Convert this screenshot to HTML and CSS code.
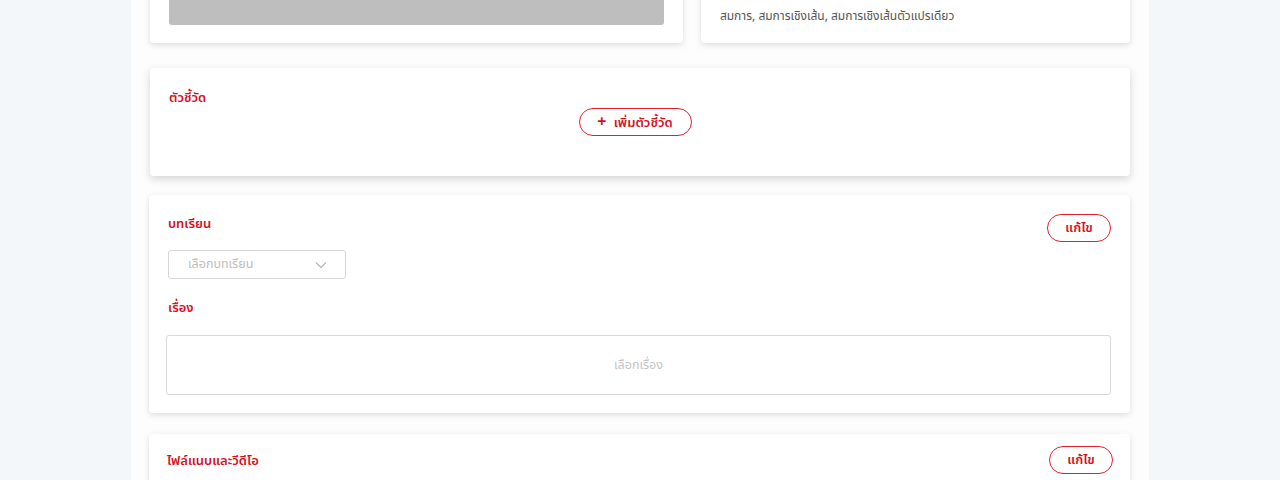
FILE: index.html
```html
<!DOCTYPE html>
<html lang="th">
<head>
<meta charset="utf-8">
<link rel="stylesheet" href="styles.css">
</head>
<body>
<main class="page">
  <div class="top-row">
    <section class="card card-cover">
      <div class="cover-img"></div>
    </section>
    <section class="card card-tags">
      <p class="tags">สมการ, สมการเชิงเส้น, สมการเชิงเส้นตัวแปรเดียว</p>
    </section>
  </div>

  <section class="card card-indicator">
    <h2 class="title">ตัวชี้วัด</h2>
    <div class="center">
      <button class="pill pill-add"><span class="plus">+</span> เพิ่มตัวชี้วัด</button>
    </div>
  </section>

  <section class="card card-lesson">
    <div class="head">
      <h2 class="title">บทเรียน</h2>
      <button class="pill pill-edit">แก้ไข</button>
    </div>
    <div class="select">
      <span>เลือกบทเรียน</span>
      <svg width="12" height="8" viewBox="0 0 12 8"><path d="M1 1.5 L6 6.5 L11 1.5" fill="none" stroke="#b5b5b5" stroke-width="1.2"/></svg>
    </div>
    <h2 class="title title-topic">เรื่อง</h2>
    <div class="topic-box">เลือกเรื่อง</div>
  </section>

  <section class="card card-files">
    <div class="head">
      <h2 class="title">ไฟล์แนบและวีดีโอ</h2>
      <button class="pill pill-edit">แก้ไข</button>
    </div>
  </section>
</main>
</body>
</html>
```

FILE: styles.css
```css
* { box-sizing: border-box; }
html, body { margin: 0; padding: 0; }
body {
  background: #f3f7fa;
  font-family: "Noto Sans Thai", "Noto Sans", "Noto Sans CJK SC", sans-serif;
  height: 480px;
  overflow: hidden;
}
.page {
  margin-left: 131px;
  width: 1018px;
  min-height: 480px;
  background: #fdfdfd;
  padding: 0 19px 0 18px;
  display: flex;
  flex-direction: column;
}
.card {
  background: #fff;
  border-radius: 4px;
  box-shadow: 0 2px 6px rgba(0,0,0,0.13);
}
.top-row {
  display: flex;
  gap: 18px;
  margin-top: -100px;
}
.card-cover {
  width: 534px;
  margin-left: 1px;
  padding: 19px 19px 18px;
}
.cover-img {
  height: 106px;
  background: #bebebe;
  border-radius: 3px;
}
.card-tags {
  width: 430px;
  padding: 0 19px 17px;
  display: flex;
  align-items: flex-end;
}
.tags {
  margin: 0;
  font-size: 12px;
  line-height: 20px;
  color: #555;
}
.title {
  margin: 0;
  font-size: 13px;
  line-height: 20px;
  font-weight: 600;
  color: #d4101e;
}
.card-indicator {
  margin-top: 25px;
  margin-left: 1px;
  height: 108px;
  padding: 20px 19px 0;
  box-shadow: 0 3px 8px rgba(0,0,0,0.16);
}
.center {
  display: flex;
  justify-content: center;
  margin-top: 0;
  padding-right: 10px;
}
.pill {
  font-family: inherit;
  background: #fff;
  border: 1px solid #e0202c;
  color: #d4101e;
  border-radius: 14px;
  height: 28px;
  font-size: 13px;
  font-weight: 600;
  padding: 0;
  cursor: pointer;
}
.pill-add { width: 113px; }
.plus { font-size: 16px; font-weight: 700; margin-right: 4px; }
.pill-edit { width: 64px; }
.card-lesson {
  margin-top: 19px;
  height: 218px;
  padding: 18px 19px 0 19px;
}
.head {
  display: flex;
  justify-content: space-between;
  align-items: flex-start;
}
.card-lesson .head .title { margin-top: 1px; }
.head .pill { margin-top: 1px; }
.select {
  margin-top: 8px;
  width: 178px;
  height: 29px;
  border: 1px solid #d6d6d6;
  border-radius: 3px;
  display: flex;
  align-items: center;
  justify-content: space-between;
  padding: 0 18px 0 19px;
  font-size: 12.5px;
  color: #bdbdbd;
}
.title-topic { margin-top: 19px; }
.topic-box {
  margin-top: 17px;
  margin-left: -2px;
  height: 60px;
  border: 1px solid #d8d8d8;
  border-radius: 3px;
  display: flex;
  align-items: center;
  justify-content: center;
  font-size: 12.5px;
  color: #c4c4c4;
}
.card-files {
  margin-top: 21px;
  height: 80px;
  padding: 12px 17px 0 18px;
}
.card-files .title { margin-top: 5px; }
.card-files .pill { margin-top: 0; }
```
